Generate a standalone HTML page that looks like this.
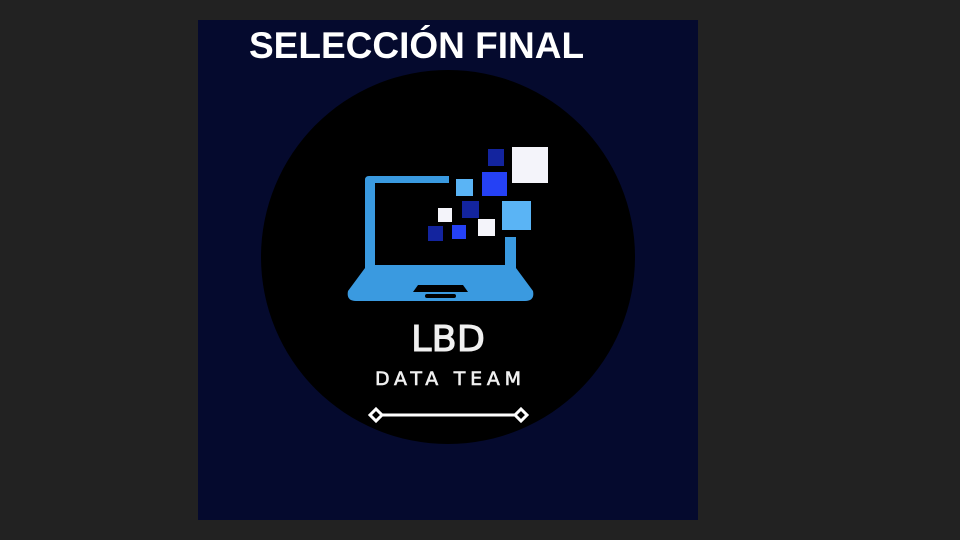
<!DOCTYPE html>
<html><head><style>
body{margin:0;width:960px;height:540px;background:#222222;overflow:hidden;position:relative;font-family:"Liberation Sans",sans-serif}
#p{position:absolute;left:198px;top:20px;width:500px;height:500px;background:#050a2e}
#t{position:absolute;left:249px;top:25px;color:#fff;font-weight:bold;font-size:37px;white-space:nowrap}
</style></head><body>
<div id="p"></div>
<svg style="position:absolute;left:0;top:0" width="960" height="540">
<circle cx="448" cy="257" r="187" fill="#000"/>
<path d="M369 176 H449 V183 H375 V265 H505 V237 H516 V268 L533 291 Q535 301 525 301 H356 Q346 301 348 291 L365 268 V180 Q365 176 369 176 Z" fill="#3a9ae0"/>
<path d="M418 285 H463 L468 292 H413 Z" fill="#000"/>
<rect x="425" y="294" width="31" height="4" rx="2" fill="#000"/>
<rect x="488" y="149" width="16" height="17" fill="#13249e"/>
<rect x="512" y="147" width="36" height="36" fill="#f4f4fa"/>
<rect x="482" y="172" width="25" height="24" fill="#2541f5"/>
<rect x="456" y="179" width="17" height="17" fill="#5ab4f5"/>
<rect x="502" y="201" width="29" height="29" fill="#5ab4f5"/>
<rect x="462" y="201" width="17" height="17" fill="#13249e"/>
<rect x="438" y="208" width="14" height="14" fill="#f4f4fa"/>
<rect x="478" y="219" width="17" height="17" fill="#f4f4fa"/>
<rect x="452" y="225" width="14" height="14" fill="#2541f5"/>
<rect x="428" y="226" width="15" height="15" fill="#13249e"/>
<text x="448" y="351" text-anchor="middle" fill="#f0f0f0" stroke="#f0f0f0" stroke-width="1" font-family="DejaVu Sans, sans-serif" font-size="36" textLength="74" lengthAdjust="spacingAndGlyphs">LBD</text>
<text x="448" y="385" text-anchor="middle" fill="#f0f0f0" stroke="#f0f0f0" stroke-width="0.6" font-family="DejaVu Sans, sans-serif" font-size="19" textLength="146" lengthAdjust="spacing">DATA TEAM</text>
<line x1="380" y1="415" x2="517" y2="415" stroke="#fff" stroke-width="3"/>
<path d="M376 409 L382 415 L376 421 L370 415 Z" fill="#000" stroke="#fff" stroke-width="3"/>
<path d="M521 409 L527 415 L521 421 L515 415 Z" fill="#000" stroke="#fff" stroke-width="3"/>
</svg>
<div id="t">SELECCIÓN FINAL</div>
</body></html>
